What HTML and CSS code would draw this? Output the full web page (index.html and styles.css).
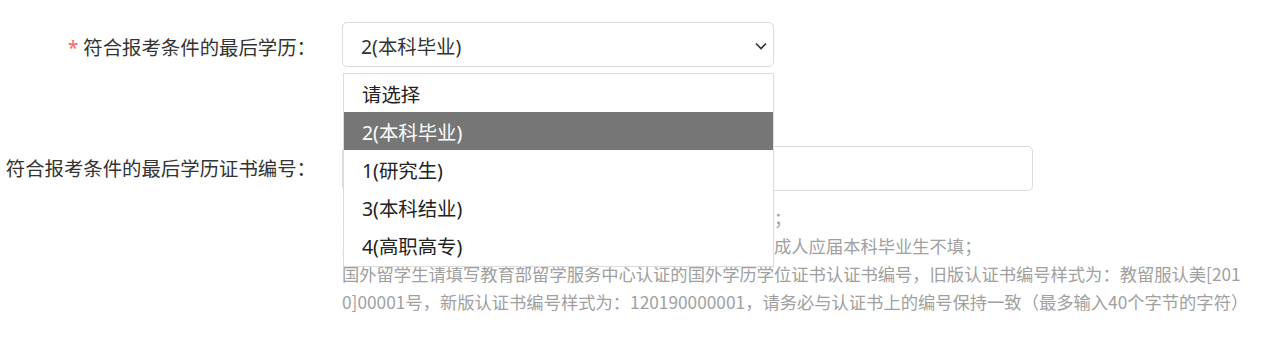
FILE: index.html
```html
<!DOCTYPE html>
<html lang="zh-CN">
<head>
    <meta charset="UTF-8">
    <meta name="viewport" content="width=device-width, initial-scale=1.0">
    <title>报名信息</title>
    <link rel="stylesheet" href="styles.css">
</head>
<body>
    <div class="form">
        <div class="row">
            <label class="label"><span class="req">*</span>符合报考条件的最后学历：</label>
            <div class="field">
                <div class="select">
                    <span>2(本科毕业)</span>
                    <svg class="arrow" width="12" height="8" viewBox="0 0 12 8">
                        <path d="M1 1.5 L6 6.5 L11 1.5" fill="none" stroke="#333" stroke-width="1.6"/>
                    </svg>
                </div>
                <ul class="options">
                    <li>请选择</li>
                    <li class="active">2(本科毕业)</li>
                    <li>1(研究生)</li>
                    <li>3(本科结业)</li>
                    <li>4(高职高专)</li>
                </ul>
            </div>
        </div>

        <div class="row row-top">
            <label class="label label-tall">符合报考条件的最后学历证书编号：</label>
            <div class="field">
                <input type="text" class="text">
                <div class="help">
                    <p>普通高校应届毕业生填写学信网电子注册备案表线验证码；</p>
                    <p>应届毕业生填写学历证书编号时请先核对信息，自考生和成人应届本科毕业生不填；</p>
                    <p class="wrap">国外留学生请填写教育部留学服务中心认证的国外学历学位证书认证书编号，旧版认证书编号样式为：教留服认美[2010]00001号，新版认证书编号样式为：120190000001，请务必与认证书上的编号保持一致（最多输入40个字节的字符）</p>
                </div>
            </div>
        </div>
    </div>
</body>
</html>
```

FILE: styles.css
```css
body {
    margin: 0;
    background-color: #fff;
    font-family: 'Noto Sans', 'Noto Sans CJK SC', sans-serif;
    color: #333;
}

.form {
    padding-top: 22px;
}

.row {
    display: flex;
    align-items: center;
    gap: 26px;
}

.row-top {
    align-items: flex-start;
    margin-top: 79px;
}

.label {
    width: 316px;
    flex-shrink: 0;
    text-align: right;
    font-size: 19.4px;
    color: #333;
    white-space: nowrap;
    padding-top: 3px;
}

.label-tall {
    line-height: 45px;
    padding-top: 0;
}

.req {
    color: #f56c6c;
    margin-right: 5px;
}

.field {
    position: relative;
}

.select {
    width: 432px;
    height: 45px;
    box-sizing: border-box;
    border: 1px solid #dcdcdc;
    border-radius: 5px;
    padding: 2px 6px 0 18px;
    display: flex;
    align-items: center;
    justify-content: space-between;
    font-size: 19.4px;
    color: #333;
}

.options {
    position: absolute;
    top: 51px;
    left: 1px;
    width: 431px;
    box-sizing: border-box;
    margin: 0;
    padding: 0 0 2px;
    list-style: none;
    background-color: #fff;
    border: 1px solid #dcdcdc;
    font-size: 19.4px;
    color: #222;
    z-index: 2;
}

.options li {
    height: 38px;
    box-sizing: border-box;
    padding: 4px 0 0 18px;
    line-height: 34px;
}

.options li.active {
    background-color: #767676;
    color: #fff;
}

.text {
    display: block;
    width: 691px;
    height: 45px;
    box-sizing: border-box;
    border: 1px solid #dcdcdc;
    border-radius: 5px;
    margin: 0;
}

.help {
    margin-top: 13px;
    width: 900px;
    font-family: 'Noto Sans CJK SC', sans-serif;
    font-size: 17.3px;
    line-height: 28px;
    color: #a0a0a0;
}

.help p {
    margin: 0;
}

.help .wrap {
    word-break: break-all;
}
```
